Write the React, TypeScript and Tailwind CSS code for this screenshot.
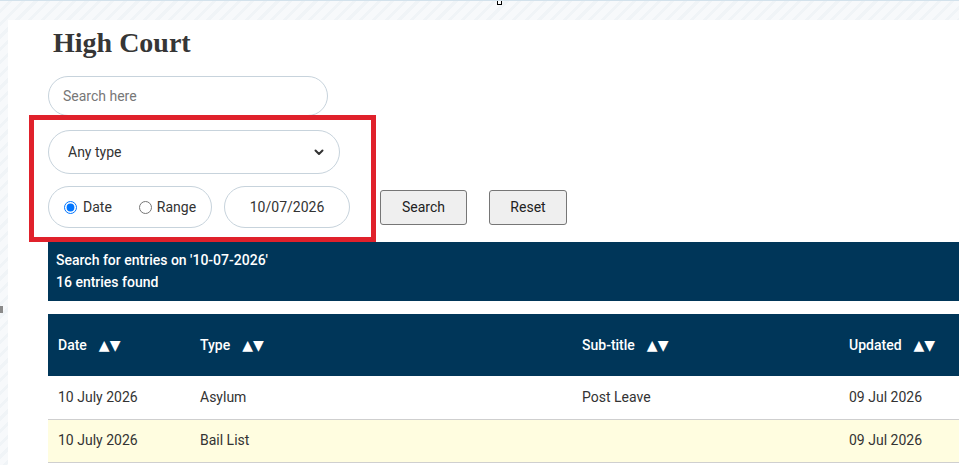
import React from 'react';

const rows = [
  { date: '10 July 2026', type: 'Asylum', sub: 'Post Leave', updated: '09 Jul 2026', alt: false },
  { date: '10 July 2026', type: 'Bail List', sub: '', updated: '09 Jul 2026', alt: true },
];

function Sort() {
  return <span className="ml-3 text-[14px] font-['DejaVu_Sans',sans-serif]">▲▼</span>;
}

export default function App() {
  return (
    <div className="relative w-[959px] h-[465px] overflow-hidden font-['Roboto',sans-serif] bg-[#f5f8fa] bg-[repeating-linear-gradient(135deg,#f7f9fb_0px,#f7f9fb_6px,#f0f4f7_6px,#f0f4f7_9px)] border-t border-[#d3e2ec]">
      {/* stray editor marks */}
      <div className="absolute left-[497px] top-[-1px] w-[5px] h-[5px] border border-black bg-white" />
      <div className="absolute left-0 top-[305px] w-[3px] h-[7px] bg-[#8a8a8a]" />

      <div className="ml-[8px] mt-[19px] bg-white h-[500px] pl-[40px] pt-[6px]">
        <h1 className="ml-[5px] text-[28px] leading-[34px] font-bold text-[#363636] font-['Liberation_Serif',serif]">
          High Court
        </h1>

        <input
          placeholder="Search here"
          className="mt-[16px] block w-[280px] h-[40px] rounded-full border border-[#c7d3dc] pl-[14px] text-[14px] text-[#333] placeholder:text-[#777] outline-none"
        />

        <div className="mt-[14px] w-[292px] h-[44px] rounded-full border border-[#c7d3dc] flex items-center justify-between pl-[19px] pr-[14px] text-[14px] text-[#333]">
          <span>Any type</span>
          <svg width="12" height="12" viewBox="0 0 24 24" fill="none" stroke="#333" strokeWidth="4" strokeLinecap="round" strokeLinejoin="round">
            <path d="M5 9l7 7 7-7" />
          </svg>
        </div>

        <div className="mt-[12px] flex items-center">
          <div className="w-[164px] h-[42px] rounded-full border border-[#c7d3dc] flex items-center pl-[15px] text-[14px] text-[#333]">
            <label className="flex items-center">
              <input type="radio" name="mode" defaultChecked className="m-0 w-[13px] h-[13px]" />
              <span className="ml-[6px]">Date</span>
            </label>
            <label className="flex items-center ml-[27px]">
              <input type="radio" name="mode" className="m-0 w-[13px] h-[13px]" />
              <span className="ml-[5px]">Range</span>
            </label>
          </div>
          <input
            readOnly
            value="10/07/2026"
            className="ml-[12px] w-[126px] h-[42px] rounded-full border border-[#c7d3dc] text-center text-[14px] text-[#333] outline-none"
          />
          <button className="ml-[30px] w-[87px] h-[35px] bg-[#efefef] border border-[#767676] rounded-[3px] text-[14px] text-[#222]">
            Search
          </button>
          <button className="ml-[22px] w-[78px] h-[35px] bg-[#efefef] border border-[#767676] rounded-[3px] text-[14px] text-[#222]">
            Reset
          </button>
        </div>

        <div className="mt-[14px] bg-[#003659] text-white text-[14px] font-medium leading-[22px] px-[8px] py-[7px] h-[59px]">
          <p>Search for entries on '10-07-2026'</p>
          <p>16 entries found</p>
        </div>

        <table className="mt-[13px] w-[960px] table-fixed border-collapse text-[14px]">
          <colgroup>
            <col className="w-[142px]" />
            <col className="w-[382px]" />
            <col className="w-[267px]" />
            <col />
          </colgroup>
          <thead>
            <tr className="bg-[#003659] text-white h-[62px]">
              <th className="text-left font-medium pl-[10px]">Date<Sort /></th>
              <th className="text-left font-medium pl-[10px]">Type<Sort /></th>
              <th className="text-left font-medium pl-[10px]">Sub-title<Sort /></th>
              <th className="text-left font-medium pl-[10px]">Updated<Sort /></th>
            </tr>
          </thead>
          <tbody className="text-[#333]">
            {rows.map((r, i) => (
              <tr key={i} className={`h-[43px] border-b border-[#cfcfcf] ${r.alt ? 'bg-[#fffde0]' : 'bg-white'}`}>
                <td className="pl-[10px]">{r.date}</td>
                <td className="pl-[10px]">{r.type}</td>
                <td className="pl-[10px]">{r.sub}</td>
                <td className="pl-[10px]">{r.updated}</td>
              </tr>
            ))}
          </tbody>
        </table>
      </div>

      {/* annotation box drawn over the filters */}
      <div className="absolute left-[29px] top-[114px] w-[347px] h-[127px] border-[5px] border-[#e0212b] pointer-events-none" />
    </div>
  );
}
